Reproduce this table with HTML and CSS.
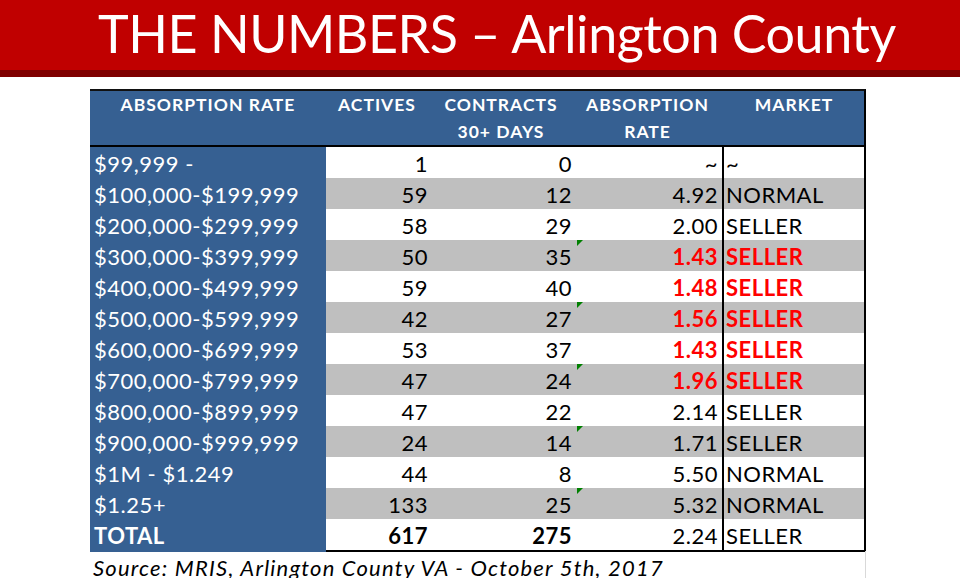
FILE: index.html
```html
<!DOCTYPE html>
<html>
<head>
<meta charset="utf-8">
<link rel="stylesheet" href="styles.css">
</head>
<body>
<header class="banner">
  <h1 class="title">THE NUMBERS – Arlington County</h1>
</header>
<div class="strip"></div>
<main class="content">
  <div class="sheet">
    <div class="row head">
      <div class="cell">ABSORPTION RATE</div>
      <div class="cell">ACTIVES</div>
      <div class="cell">CONTRACTS<br>30+ DAYS</div>
      <div class="cell">ABSORPTION<br>RATE</div>
      <div class="cell">MARKET</div>
    </div>
    <div class="row">
      <div class="cell label">$99,999 -</div>
      <div class="cell num">1</div>
      <div class="cell num">0</div>
      <div class="cell num">~</div>
      <div class="cell mkt">~</div>
    </div>
    <div class="row alt">
      <div class="cell label">$100,000-$199,999</div>
      <div class="cell num">59</div>
      <div class="cell num">12</div>
      <div class="cell num">4.92</div>
      <div class="cell mkt">NORMAL</div>
    </div>
    <div class="row">
      <div class="cell label">$200,000-$299,999</div>
      <div class="cell num">58</div>
      <div class="cell num">29</div>
      <div class="cell num">2.00</div>
      <div class="cell mkt">SELLER</div>
    </div>
    <div class="row alt">
      <div class="cell label">$300,000-$399,999</div>
      <div class="cell num">50</div>
      <div class="cell num">35</div>
      <div class="cell num flag hot">1.43</div>
      <div class="cell mkt hot">SELLER</div>
    </div>
    <div class="row">
      <div class="cell label">$400,000-$499,999</div>
      <div class="cell num">59</div>
      <div class="cell num">40</div>
      <div class="cell num hot">1.48</div>
      <div class="cell mkt hot">SELLER</div>
    </div>
    <div class="row alt">
      <div class="cell label">$500,000-$599,999</div>
      <div class="cell num">42</div>
      <div class="cell num">27</div>
      <div class="cell num flag hot">1.56</div>
      <div class="cell mkt hot">SELLER</div>
    </div>
    <div class="row">
      <div class="cell label">$600,000-$699,999</div>
      <div class="cell num">53</div>
      <div class="cell num">37</div>
      <div class="cell num hot">1.43</div>
      <div class="cell mkt hot">SELLER</div>
    </div>
    <div class="row alt">
      <div class="cell label">$700,000-$799,999</div>
      <div class="cell num">47</div>
      <div class="cell num">24</div>
      <div class="cell num flag hot">1.96</div>
      <div class="cell mkt hot">SELLER</div>
    </div>
    <div class="row">
      <div class="cell label">$800,000-$899,999</div>
      <div class="cell num">47</div>
      <div class="cell num">22</div>
      <div class="cell num">2.14</div>
      <div class="cell mkt">SELLER</div>
    </div>
    <div class="row alt">
      <div class="cell label">$900,000-$999,999</div>
      <div class="cell num">24</div>
      <div class="cell num">14</div>
      <div class="cell num flag">1.71</div>
      <div class="cell mkt">SELLER</div>
    </div>
    <div class="row">
      <div class="cell label">$1M - $1.249</div>
      <div class="cell num">44</div>
      <div class="cell num">8</div>
      <div class="cell num">5.50</div>
      <div class="cell mkt">NORMAL</div>
    </div>
    <div class="row alt">
      <div class="cell label">$1.25+</div>
      <div class="cell num">133</div>
      <div class="cell num">25</div>
      <div class="cell num flag">5.32</div>
      <div class="cell mkt">NORMAL</div>
    </div>
    <div class="row total">
      <div class="cell label strong">TOTAL</div>
      <div class="cell num strong">617</div>
      <div class="cell num strong">275</div>
      <div class="cell num">2.24</div>
      <div class="cell mkt">SELLER</div>
    </div>
  </div>
  <p class="source">Source: MRIS, Arlington County VA - October 5th, 2017</p>
</main>
</body>
</html>
```

FILE: styles.css
```css
html, body {
  margin: 0;
  padding: 0;
  background: #ffffff;
  overflow: hidden;
}
body {
  width: 960px;
  height: 578px;
  font-family: "Lato", "Open Sans", sans-serif;
  color: #000;
}
.banner {
  background: #c00000;
  height: 70px;
  padding-left: 98px;
  box-sizing: border-box;
}
.title {
  margin: 0;
  font-family: "Lato", sans-serif;
  font-weight: 400;
  font-size: 52px;
  letter-spacing: -0.45px;
  line-height: 66px;
  color: #ffffff;
  white-space: nowrap;
}
.strip {
  height: 7px;
  background: #7f0000;
}
.content {
  position: relative;
  padding: 12px 0 0 90px;
}
.sheet {
  width: 776px;
}
.row {
  display: grid;
  grid-template-columns: 236px 104px 147px 145px 144px;
  height: 31px;
}
.row.head {
  height: 54px;
  background: #366092;
  border-top: 2px solid #111;
  border-bottom: 2px solid #000;
  border-right: 2px solid #000;
  width: 774px;
}
.head .cell {
  color: #fff;
  font-weight: 700;
  font-size: 17.5px;
  letter-spacing: 1px;
  line-height: 27px;
  text-align: center;
  padding-top: 0;
}
.cell {
  box-sizing: border-box;
  font-size: 22px;
  line-height: 29px;
  padding-top: 2px;
  white-space: nowrap;
  letter-spacing: 0.5px;
  position: relative;
}
.label {
  background: #366092;
  color: #fff;
  padding-left: 4px;
}
.num {
  text-align: right;
}
.row .cell:nth-child(2) { padding-right: 2px; }
.row .cell:nth-child(3) { padding-right: 5px; }
.row .cell:nth-child(4) { padding-right: 4px; }
.mkt {
  border-left: 2px solid #000;
  border-right: 2px solid #000;
  padding-left: 2px;
}
.alt .num, .alt .mkt {
  background: #bfbfbf;
}
.hot {
  color: #ff0000;
  font-weight: 700;
}
.strong {
  font-weight: 700;
}
.flag::before {
  content: "";
  position: absolute;
  left: 0;
  top: 0;
  width: 0;
  height: 0;
  border-top: 6px solid #008000;
  border-right: 6px solid transparent;
}
.total .num, .total .mkt {
  border-bottom: 2px solid #000;
}
.source {
  margin: 0;
  padding: 5px 0 0 3px;
  font-style: italic;
  font-size: 22px;
  line-height: 26px;
  letter-spacing: 1.2px;
  white-space: nowrap;
}
.content::after {
  content: "";
  position: absolute;
  left: 865px;
  top: 474px;
  width: 1px;
  height: 40px;
  background: #d9d9d9;
}
```
